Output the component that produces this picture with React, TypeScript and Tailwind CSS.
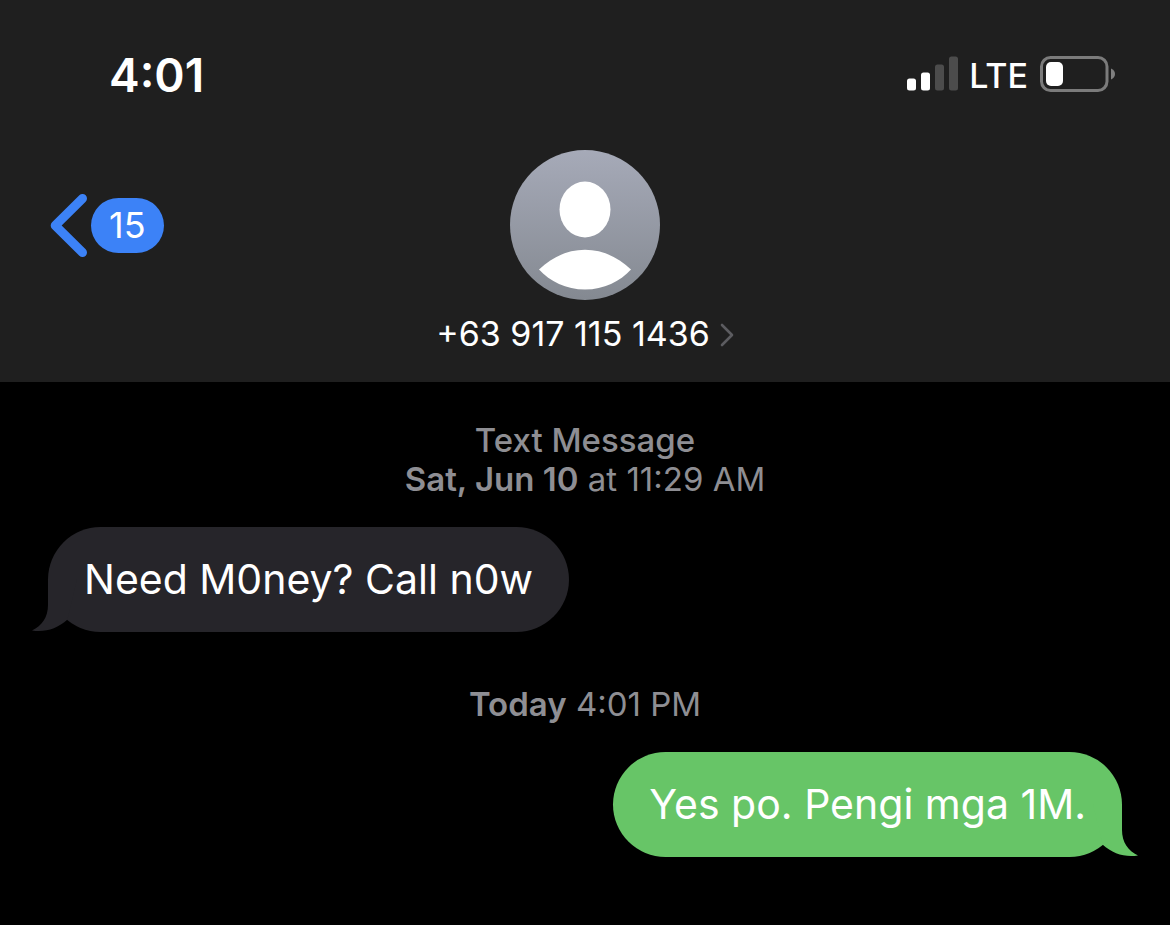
import type { ReactNode } from "react";

function SignalBars() {
  return (
    <svg width="52" height="36" viewBox="0 0 52 36" role="img" aria-label="Signal strength: 2 of 4">
      <rect x="0" y="22.500" width="9" height="12" rx="2.5" fill="#fff" />
      <rect x="14" y="16.500" width="9" height="18" rx="2.5" fill="#fff" />
      <rect x="28" y="8.500" width="9" height="26" rx="2.5" fill="#4c4c4c" />
      <rect x="42" y="0.500" width="9" height="34" rx="2.5" fill="#4c4c4c" />
    </svg>
  );
}

function Battery() {
  return (
    <svg width="75" height="36" viewBox="0 0 75 36" role="img" aria-label="Battery low">
      <rect x="1.5" y="1.5" width="65.5" height="33" rx="9" fill="none" stroke="#7b7b7b" strokeWidth="3" />
      <rect x="6" y="6" width="17" height="24" rx="5" fill="#fff" />
      <path d="M71 12.5C73.6 13.4 75 15.6 75 18S73.6 22.6 71 23.5Z" fill="#7f7f7f" />
    </svg>
  );
}

function StatusBar() {
  return (
    <div className="flex h-[150px] items-center justify-between pr-[55px] pl-[109px]">
      <time className="text-[46px] font-semibold">4:01</time>
      <div className="flex items-center pb-0.5">
        <SignalBars />
        <span className="mr-3 ml-2.5 pt-0.5 text-[34px] font-medium">LTE</span>
        <Battery />
      </div>
    </div>
  );
}

function Avatar() {
  return (
    <svg width="150" height="150" viewBox="0 0 150 150" aria-hidden="true">
      <defs>
        <linearGradient id="avatar" x1="0" y1="0" x2="0" y2="1">
          <stop offset="0" stopColor="#a6aab8" />
          <stop offset="1" stopColor="#848991" />
        </linearGradient>
      </defs>
      <circle cx="75" cy="75" r="75" fill="url(#avatar)" />
      <ellipse cx="75" cy="59.5" rx="25.5" ry="28" fill="#fff" />
      <path d="M29 119.500C42 107 58 99.700 75 99.700S108 107 121 119.500C110 131.500 94 139.500 75 139.500S40 131.500 29 119.500Z" fill="#fff" />
    </svg>
  );
}

function Header() {
  return (
    <header className="bg-[#1f1f1f]">
      <StatusBar />
      <div className="grid grid-cols-[1fr_auto_1fr] items-start">
        <button
          type="button"
          aria-label="Back, 15 unread"
          className="flex h-[150px] items-center gap-[3px] justify-self-start pl-[50px]"
        >
          <svg width="38" height="64" viewBox="0 0 38 64" aria-hidden="true">
            <path
              d="M32.500 5.500L5.200 32.500L32.500 59.500"
              fill="none"
              stroke="#3c82f7"
              strokeWidth="9"
              strokeLinecap="round"
              strokeLinejoin="round"
            />
          </svg>
          <span className="rounded-full bg-[#3c82f7] px-[18px] text-4xl leading-[55px]">15</span>
        </button>
        <button type="button" className="flex flex-col items-center pb-7">
          <Avatar />
          <span className="mt-3.5 flex items-center gap-2.5 text-[34px] leading-10">
            +63 917 115 1436
            <svg width="14" height="24" viewBox="0 0 14 24" className="mt-0.5" aria-hidden="true">
              <path
                d="M2 2L12 12L2 22"
                fill="none"
                stroke="#5c5c60"
                strokeWidth="2.600"
                strokeLinecap="round"
                strokeLinejoin="round"
              />
            </svg>
          </span>
        </button>
      </div>
    </header>
  );
}

function Timestamp({ children }: { children: ReactNode }) {
  return <div className="text-center text-[33px] leading-[39px] text-[#8e8e93]">{children}</div>;
}

const tailPath = "M16 0V26C16 38 10 47 0 51.500C13 53.500 25 50 35.500 40.500L45 0Z";

function ReceivedBubble({ children }: { children: ReactNode }) {
  return (
    <div className="relative self-start rounded-full bg-[#26252a] px-9 text-[41px] leading-[105px]">
      <svg width="45" height="53" viewBox="0 0 45 53" className="absolute bottom-0 -left-4" aria-hidden="true">
        <path d={tailPath} fill="#26252a" />
      </svg>
      <p className="relative">{children}</p>
    </div>
  );
}

function SentBubble({ children }: { children: ReactNode }) {
  return (
    <div className="relative self-end rounded-full bg-[#67c567] px-9 text-[41px] leading-[105px]">
      <svg
        width="45"
        height="53"
        viewBox="0 0 45 53"
        className="absolute -right-4 bottom-0 -scale-x-100"
        aria-hidden="true"
      >
        <path d={tailPath} fill="#67c567" />
      </svg>
      <p className="relative">{children}</p>
    </div>
  );
}

export default function App() {
  return (
    <div className="flex min-h-screen flex-col bg-black font-[Inter,'Liberation_Sans',sans-serif] text-white">
      <Header />
      <main className="flex flex-col px-12 pt-[39px] pb-16">
        <Timestamp>
          <p className="font-medium">Text Message</p>
          <p>
            <strong className="font-semibold">Sat, Jun 10</strong> at 11:29 AM
          </p>
        </Timestamp>
        <div className="mt-7 flex flex-col">
          <ReceivedBubble>Need M0ney? Call n0w</ReceivedBubble>
        </div>
        <div className="mt-[53px]">
          <Timestamp>
            <p>
              <strong className="font-semibold">Today</strong> 4:01 PM
            </p>
          </Timestamp>
        </div>
        <div className="mt-7 flex flex-col">
          <SentBubble>Yes po. Pengi mga 1M.</SentBubble>
        </div>
      </main>
    </div>
  );
}
